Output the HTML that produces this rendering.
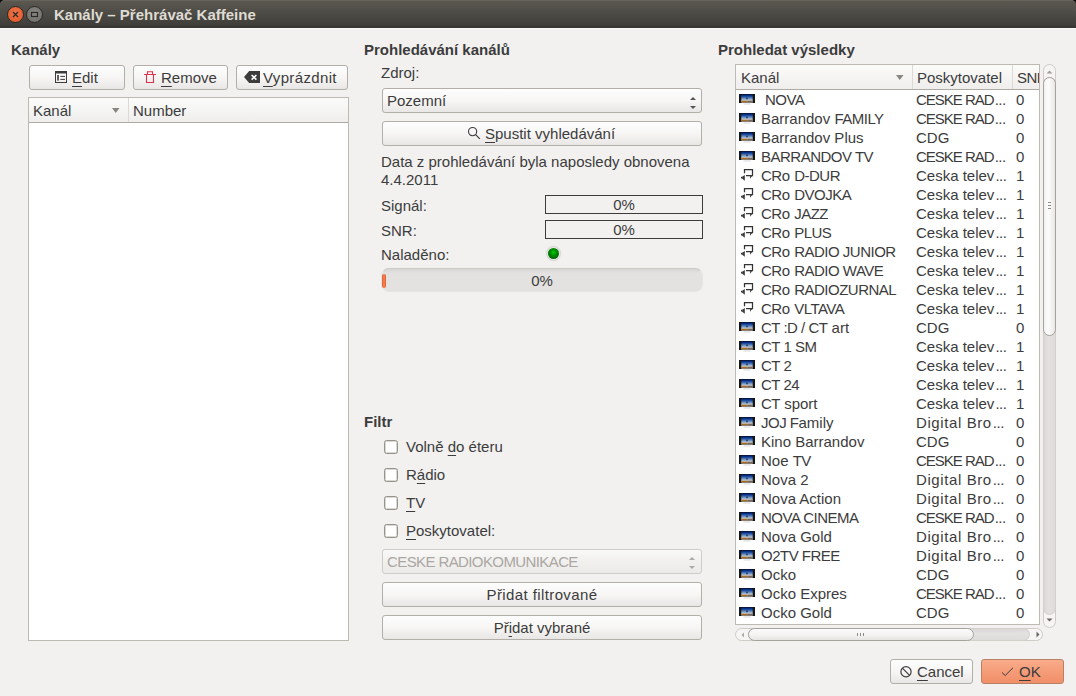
<!DOCTYPE html>
<html><head><meta charset="utf-8">
<style>
*{box-sizing:border-box;margin:0;padding:0}
html,body{width:1076px;height:696px;overflow:hidden;background:#f2f1f0}
body{position:relative;font-family:"Liberation Sans",sans-serif;font-size:15px;line-height:17px;color:#3c3c3c}
.a{position:absolute;white-space:nowrap}
#tb{left:0;top:0;width:1076px;height:28px;background:linear-gradient(#5b5950,#4f4d47 40%,#403f3b 88%,#35332f);border-radius:5px 5px 0 0;box-shadow:inset 0 1px 0 #66645a}
#tbw{left:0;top:0;width:1076px;height:6px;background:#120c10}
.title{left:54px;top:6px;font-size:15px;font-weight:bold;color:#dfdbd2}
.cbtn{width:17px;height:17px;border-radius:50%;top:6px}
.lbl{font-weight:bold;font-size:15px}
.btn{border:1px solid #b2aea8;border-radius:3px;background:linear-gradient(#fdfdfd,#f7f6f5 50%,#e9e7e5)}
.u{text-decoration:underline;text-decoration-thickness:1px;text-underline-offset:3px}
.tbl{background:#fff;border:1px solid #bdb9b3}
.hdr{background:linear-gradient(#fbfbfa,#efeeed);border-bottom:1px solid #aeaaa4;height:25px}
.chk{width:14px;height:14px;border:1px solid #96928c;border-radius:2.5px;background:#fff;box-shadow:inset 0 0 0 0.5px #b5b1ab}
.box{border:1px solid #3c3c3c;background:#f2f1f0;text-align:center;line-height:18px}
svg{position:absolute;overflow:visible}
.U{letter-spacing:-0.5px}
</style></head><body>
<div class="a" id="tbw"></div>
<div class="a" id="tb"></div>
<div class="a title">Kanály – Přehrávač Kaffeine</div>
<div class="a cbtn" style="left:7px;background:radial-gradient(circle at 50% 40%,#f0754a,#e05526);border:1px solid #2a2926"></div>
<div class="a cbtn" style="left:26px;background:radial-gradient(circle at 50% 40%,#8a8883,#6b6a66);border:1px solid #2a2926"></div>
<svg style="left:0;top:0" width="50" height="28"><path d="M13 12L18 17M18 12L13 17" stroke="#2b2a27" stroke-width="1.3"/><rect x="31.5" y="12.5" width="6" height="4" fill="none" stroke="#2b2a27" stroke-width="1.2"/></svg>
<div class="a" style="left:0;top:28px;width:1076px;height:1px;background:#fbfaf9"></div>

<!-- LEFT -->
<div class="a lbl" style="left:11px;top:41px">Kanály</div>
<div class="a btn" style="left:29px;top:65px;width:96px;height:25px"></div>
<div class="a btn" style="left:133px;top:65px;width:95px;height:25px"></div>
<div class="a btn" style="left:236px;top:65px;width:112px;height:25px"></div>
<svg style="left:55px;top:71px" width="12" height="12"><rect x="0.5" y="0.5" width="11" height="11" fill="none" stroke="#3c3c3c"/><rect x="0" y="0" width="12" height="2.5" fill="#3c3c3c"/><rect x="2.2" y="4" width="1.6" height="5.6" fill="#3c3c3c"/><path d="M5.3 5.4H10M5.3 8.4H10" stroke="#3c3c3c" stroke-width="1"/></svg>
<div class="a" style="left:72px;top:69px"><span class="u">E</span>dit</div>
<svg style="left:144px;top:71px" width="12" height="12"><path d="M0 3.5H12M2.5 3.5V11.5H9.5V3.5M3.5 3.5V0.8H8.5V3.5" fill="none" stroke="#d9344c" stroke-width="1.1"/></svg>
<div class="a" style="left:161px;top:69px"><span class="u">R</span>emove</div>
<svg style="left:244px;top:71px" width="16" height="12"><path d="M0 6L5.2 0H16V12H5.2Z" fill="#3c3c3c"/><path d="M7.6 4L12.4 8.6M12.4 4L7.6 8.6" stroke="#fff" stroke-width="1.6"/></svg>
<div class="a" style="left:263px;top:69px;letter-spacing:0.35px"><span class="u">V</span>yprázdnit</div>
<div class="a tbl" style="left:28px;top:97px;width:321px;height:544px"></div>
<div class="a hdr" style="left:29px;top:98px;width:319px"></div>
<div class="a" style="left:128px;top:98px;width:1px;height:24px;background:#dcdad7"></div>
<div class="a" style="left:33px;top:102px">Kanál</div>
<svg style="left:112px;top:108px" width="8" height="6"><path d="M0 0H7.5L3.75 5Z" fill="#8a8782"/></svg>
<div class="a" style="left:133px;top:102px">Number</div>

<!-- MIDDLE -->
<div class="a lbl" style="left:364px;top:41px">Prohledávání kanálů</div>
<div class="a" style="left:381px;top:64px">Zdroj:</div>
<div class="a btn" style="left:382px;top:88px;width:320px;height:25px"></div>
<div class="a" style="left:387px;top:92px">Pozemní</div>
<svg style="left:690px;top:96px" width="7" height="14"><path d="M0 4H6L3 1Z" fill="#555"/><path d="M0 10H6L3 13Z" fill="#555"/></svg>
<div class="a btn" style="left:382px;top:121px;width:320px;height:25px"></div>
<svg style="left:468px;top:127px" width="13" height="13"><circle cx="4.6" cy="4.6" r="4.1" fill="none" stroke="#3c3c3c" stroke-width="1.1"/><path d="M7.6 7.6L11.8 11.8" stroke="#3c3c3c" stroke-width="1.2"/></svg>
<div class="a" style="left:485px;top:125px"><span class="u">S</span>pustit vyhledávání</div>
<div class="a" style="left:381px;top:153px">Data z prohledávání byla naposledy obnovena</div>
<div class="a" style="left:381px;top:171px">4.4.2011</div>
<div class="a" style="left:381px;top:197px">Signál:</div>
<div class="a box" style="left:545px;top:195px;width:158px;height:19px">0%</div>
<div class="a" style="left:381px;top:222px">SNR:</div>
<div class="a box" style="left:545px;top:220px;width:158px;height:19px">0%</div>
<div class="a" style="left:381px;top:246px">Naladěno:</div>
<div class="a" style="left:548px;top:248px;width:11px;height:11px;border-radius:50%;background:radial-gradient(circle at 50% 40%,#08d008,#009400 30%,#006a00 70%,#005000);box-shadow:0 0 0 1px #e9e8e7,0 0 1px 2px rgba(150,150,150,.3)"></div>
<div class="a" style="left:381px;top:268px;width:322px;height:24px;border-radius:8px;background:linear-gradient(#d9d7d4,#e3e2e0 20%,#e3e2e0);border:1px solid #e6e5e3;border-top-color:#cdcac6"></div>
<div class="a" style="left:382px;top:274px;width:4px;height:14px;border-radius:2px;background:linear-gradient(90deg,#e0582a,#f88a5a,#e0582a)"></div>
<div class="a" style="left:381px;top:272px;width:322px;text-align:center">0%</div>

<div class="a lbl" style="left:364px;top:413px">Filtr</div>
<div class="a chk" style="left:384px;top:440px"></div>
<div class="a" style="left:406px;top:438px">Volně <span class="u">d</span>o éteru</div>
<div class="a chk" style="left:384px;top:468px"></div>
<div class="a" style="left:406px;top:466px">R<span class="u">á</span>dio</div>
<div class="a chk" style="left:384px;top:496px"></div>
<div class="a" style="left:406px;top:494px"><span class="u">T</span>V</div>
<div class="a chk" style="left:384px;top:524px"></div>
<div class="a" style="left:406px;top:522px"><span class="u">P</span>oskytovatel:</div>
<div class="a" style="left:382px;top:549px;width:320px;height:25px;border:1px solid #cfccc8;border-radius:3px;background:linear-gradient(#f9f9f8,#f1f0ef 50%,#ebeae8)"></div>
<div class="a" style="left:387px;top:553px;color:#aaa7a2;letter-spacing:-0.6px">CESKE RADIOKOMUNIKACE</div>
<svg style="left:689px;top:556px" width="7" height="14"><path d="M0 4H6L3 1Z" fill="#aaa"/><path d="M0 10H6L3 13Z" fill="#aaa"/></svg>
<div class="a btn" style="left:382px;top:582px;width:320px;height:25px;text-align:center;line-height:23px;letter-spacing:0.4px">Přidat filtrované</div>
<div class="a btn" style="left:382px;top:615px;width:320px;height:25px;text-align:center;line-height:23px">Př<span class="u">i</span>dat vybrané</div>

<!-- RIGHT -->
<svg width="0" height="0" style="position:absolute"><defs>
<linearGradient id="scr" x1="0" y1="0" x2="0" y2="1"><stop offset="0" stop-color="#00145a"/><stop offset="0.2" stop-color="#0b3c98"/><stop offset="0.5" stop-color="#6d92c4"/><stop offset="0.75" stop-color="#cfd0d0"/><stop offset="1" stop-color="#d8d0c0"/></linearGradient>
<g id="tvi"><rect x="0" y="0" width="16" height="9" fill="#161616"/><rect x="2.3" y="0.4" width="11.4" height="8.2" fill="url(#scr)"/><rect x="2.3" y="6.7" width="6.2" height="1.5" fill="#a46a28"/><rect x="8.5" y="6.7" width="5.2" height="1.5" fill="#75655a"/><circle cx="8" cy="4.3" r="1.1" fill="#34456a"/><rect x="4.5" y="9.4" width="7" height="1.1" fill="#d8dbe0"/></g>
<g id="rdi"><path d="M5.5 5.2V1.5H13.5V7.5H7" fill="none" stroke="#333" stroke-width="1.25"/><path d="M14 7L11 10.8L11.2 7Z" fill="#3a3a3a"/><path d="M2 8.8H3.4V10.6H2Z" fill="#3a3a3a"/><path d="M3.2 8.8L5.8 7V12.8L3.2 10.8Z" fill="#3a3a3a"/></g>
</defs></svg>
<div class="a lbl" style="left:718px;top:41px">Prohledat výsledky</div>
<div class="a tbl" style="left:735px;top:64px;width:305px;height:561px;overflow:hidden">
<div class="a hdr" style="left:0;top:0;width:303px"></div>
<div class="a" style="left:176px;top:0;width:1px;height:24px;background:#dcdad7"></div>
<div class="a" style="left:276px;top:0;width:1px;height:24px;background:#dcdad7"></div>
<div class="a" style="left:5px;top:4px">Kanál</div>
<svg style="left:160px;top:10px" width="8" height="6"><path d="M0 0H7.5L3.75 5Z" fill="#8a8782"/></svg>
<div class="a" style="left:181px;top:4px">Poskytovatel</div>
<div class="a U" style="left:281px;top:4px">SNR</div>
<svg style="left:3px;top:29px" width="16" height="12"><use href="#tvi"/></svg>
<div class="a" style="left:29px;top:26px"><span class="U">NOVA</span></div><div class="a" style="left:180px;top:26px"><span style="letter-spacing:-1px">CESKE RAD</span><span style="letter-spacing:-0.5px;margin-left:1px">...</span></div><div class="a" style="left:280px;top:26px">0</div>
<svg style="left:3px;top:48px" width="16" height="12"><use href="#tvi"/></svg>
<div class="a" style="left:25px;top:45px">Barrandov <span class="U">FAMILY</span></div><div class="a" style="left:180px;top:45px"><span style="letter-spacing:-1px">CESKE RAD</span><span style="letter-spacing:-0.5px;margin-left:1px">...</span></div><div class="a" style="left:280px;top:45px">0</div>
<svg style="left:3px;top:67px" width="16" height="12"><use href="#tvi"/></svg>
<div class="a" style="left:25px;top:64px">Barrandov Plus</div><div class="a" style="left:180px;top:64px">CDG</div><div class="a" style="left:280px;top:64px">0</div>
<svg style="left:3px;top:86px" width="16" height="12"><use href="#tvi"/></svg>
<div class="a" style="left:25px;top:83px"><span class="U">BARRANDOV TV</span></div><div class="a" style="left:180px;top:83px"><span style="letter-spacing:-1px">CESKE RAD</span><span style="letter-spacing:-0.5px;margin-left:1px">...</span></div><div class="a" style="left:280px;top:83px">0</div>
<svg style="left:3px;top:103px" width="16" height="14"><use href="#rdi"/></svg>
<div class="a" style="left:25px;top:102px"><span class="U">CR</span>o <span class="U">D-DUR</span></div><div class="a" style="left:180px;top:102px">Ceska telev<span style="letter-spacing:-0.5px;margin-left:1px">...</span></div><div class="a" style="left:280px;top:102px">1</div>
<svg style="left:3px;top:122px" width="16" height="14"><use href="#rdi"/></svg>
<div class="a" style="left:25px;top:121px"><span class="U">CR</span>o <span class="U">DVOJKA</span></div><div class="a" style="left:180px;top:121px">Ceska telev<span style="letter-spacing:-0.5px;margin-left:1px">...</span></div><div class="a" style="left:280px;top:121px">1</div>
<svg style="left:3px;top:141px" width="16" height="14"><use href="#rdi"/></svg>
<div class="a" style="left:25px;top:140px"><span class="U">CR</span>o <span class="U">JAZZ</span></div><div class="a" style="left:180px;top:140px">Ceska telev<span style="letter-spacing:-0.5px;margin-left:1px">...</span></div><div class="a" style="left:280px;top:140px">1</div>
<svg style="left:3px;top:160px" width="16" height="14"><use href="#rdi"/></svg>
<div class="a" style="left:25px;top:159px"><span class="U">CR</span>o <span class="U">PLUS</span></div><div class="a" style="left:180px;top:159px">Ceska telev<span style="letter-spacing:-0.5px;margin-left:1px">...</span></div><div class="a" style="left:280px;top:159px">1</div>
<svg style="left:3px;top:179px" width="16" height="14"><use href="#rdi"/></svg>
<div class="a" style="left:25px;top:178px"><span class="U">CR</span>o <span class="U">RADIO JUNIOR</span></div><div class="a" style="left:180px;top:178px">Ceska telev<span style="letter-spacing:-0.5px;margin-left:1px">...</span></div><div class="a" style="left:280px;top:178px">1</div>
<svg style="left:3px;top:198px" width="16" height="14"><use href="#rdi"/></svg>
<div class="a" style="left:25px;top:197px"><span class="U">CR</span>o <span class="U">RADIO WAVE</span></div><div class="a" style="left:180px;top:197px">Ceska telev<span style="letter-spacing:-0.5px;margin-left:1px">...</span></div><div class="a" style="left:280px;top:197px">1</div>
<svg style="left:3px;top:217px" width="16" height="14"><use href="#rdi"/></svg>
<div class="a" style="left:25px;top:216px"><span class="U">CR</span>o <span class="U">RADIOZURNAL</span></div><div class="a" style="left:180px;top:216px">Ceska telev<span style="letter-spacing:-0.5px;margin-left:1px">...</span></div><div class="a" style="left:280px;top:216px">1</div>
<svg style="left:3px;top:236px" width="16" height="14"><use href="#rdi"/></svg>
<div class="a" style="left:25px;top:235px"><span class="U">CR</span>o <span class="U">VLTAVA</span></div><div class="a" style="left:180px;top:235px">Ceska telev<span style="letter-spacing:-0.5px;margin-left:1px">...</span></div><div class="a" style="left:280px;top:235px">1</div>
<svg style="left:3px;top:257px" width="16" height="12"><use href="#tvi"/></svg>
<div class="a" style="left:25px;top:254px"><span class="U">CT :D / CT</span> art</div><div class="a" style="left:180px;top:254px">CDG</div><div class="a" style="left:280px;top:254px">0</div>
<svg style="left:3px;top:276px" width="16" height="12"><use href="#tvi"/></svg>
<div class="a" style="left:25px;top:273px"><span class="U">CT 1 SM</span></div><div class="a" style="left:180px;top:273px">Ceska telev<span style="letter-spacing:-0.5px;margin-left:1px">...</span></div><div class="a" style="left:280px;top:273px">1</div>
<svg style="left:3px;top:295px" width="16" height="12"><use href="#tvi"/></svg>
<div class="a" style="left:25px;top:292px"><span class="U">CT 2</span></div><div class="a" style="left:180px;top:292px">Ceska telev<span style="letter-spacing:-0.5px;margin-left:1px">...</span></div><div class="a" style="left:280px;top:292px">1</div>
<svg style="left:3px;top:314px" width="16" height="12"><use href="#tvi"/></svg>
<div class="a" style="left:25px;top:311px"><span class="U">CT 24</span></div><div class="a" style="left:180px;top:311px">Ceska telev<span style="letter-spacing:-0.5px;margin-left:1px">...</span></div><div class="a" style="left:280px;top:311px">1</div>
<svg style="left:3px;top:333px" width="16" height="12"><use href="#tvi"/></svg>
<div class="a" style="left:25px;top:330px"><span class="U">CT</span> sport</div><div class="a" style="left:180px;top:330px">Ceska telev<span style="letter-spacing:-0.5px;margin-left:1px">...</span></div><div class="a" style="left:280px;top:330px">1</div>
<svg style="left:3px;top:352px" width="16" height="12"><use href="#tvi"/></svg>
<div class="a" style="left:25px;top:349px"><span class="U">JOJ F</span>amily</div><div class="a" style="left:180px;top:349px"><span style="letter-spacing:0.6px">Digital Bro</span><span style="letter-spacing:-0.5px;margin-left:1px">...</span></div><div class="a" style="left:280px;top:349px">0</div>
<svg style="left:3px;top:371px" width="16" height="12"><use href="#tvi"/></svg>
<div class="a" style="left:25px;top:368px">Kino Barrandov</div><div class="a" style="left:180px;top:368px">CDG</div><div class="a" style="left:280px;top:368px">0</div>
<svg style="left:3px;top:390px" width="16" height="12"><use href="#tvi"/></svg>
<div class="a" style="left:25px;top:387px">Noe <span class="U">TV</span></div><div class="a" style="left:180px;top:387px"><span style="letter-spacing:-1px">CESKE RAD</span><span style="letter-spacing:-0.5px;margin-left:1px">...</span></div><div class="a" style="left:280px;top:387px">0</div>
<svg style="left:3px;top:409px" width="16" height="12"><use href="#tvi"/></svg>
<div class="a" style="left:25px;top:406px">Nova 2</div><div class="a" style="left:180px;top:406px"><span style="letter-spacing:0.6px">Digital Bro</span><span style="letter-spacing:-0.5px;margin-left:1px">...</span></div><div class="a" style="left:280px;top:406px">0</div>
<svg style="left:3px;top:428px" width="16" height="12"><use href="#tvi"/></svg>
<div class="a" style="left:25px;top:425px">Nova Action</div><div class="a" style="left:180px;top:425px"><span style="letter-spacing:0.6px">Digital Bro</span><span style="letter-spacing:-0.5px;margin-left:1px">...</span></div><div class="a" style="left:280px;top:425px">0</div>
<svg style="left:3px;top:447px" width="16" height="12"><use href="#tvi"/></svg>
<div class="a" style="left:25px;top:444px"><span class="U">NOVA CINEMA</span></div><div class="a" style="left:180px;top:444px"><span style="letter-spacing:-1px">CESKE RAD</span><span style="letter-spacing:-0.5px;margin-left:1px">...</span></div><div class="a" style="left:280px;top:444px">0</div>
<svg style="left:3px;top:466px" width="16" height="12"><use href="#tvi"/></svg>
<div class="a" style="left:25px;top:463px">Nova Gold</div><div class="a" style="left:180px;top:463px"><span style="letter-spacing:0.6px">Digital Bro</span><span style="letter-spacing:-0.5px;margin-left:1px">...</span></div><div class="a" style="left:280px;top:463px">0</div>
<svg style="left:3px;top:485px" width="16" height="12"><use href="#tvi"/></svg>
<div class="a" style="left:25px;top:482px"><span class="U">O2TV FREE</span></div><div class="a" style="left:180px;top:482px"><span style="letter-spacing:0.6px">Digital Bro</span><span style="letter-spacing:-0.5px;margin-left:1px">...</span></div><div class="a" style="left:280px;top:482px">0</div>
<svg style="left:3px;top:504px" width="16" height="12"><use href="#tvi"/></svg>
<div class="a" style="left:25px;top:501px">Ocko</div><div class="a" style="left:180px;top:501px">CDG</div><div class="a" style="left:280px;top:501px">0</div>
<svg style="left:3px;top:523px" width="16" height="12"><use href="#tvi"/></svg>
<div class="a" style="left:25px;top:520px">Ocko Expres</div><div class="a" style="left:180px;top:520px"><span style="letter-spacing:-1px">CESKE RAD</span><span style="letter-spacing:-0.5px;margin-left:1px">...</span></div><div class="a" style="left:280px;top:520px">0</div>
<svg style="left:3px;top:542px" width="16" height="12"><use href="#tvi"/></svg>
<div class="a" style="left:25px;top:539px">Ocko Gold</div><div class="a" style="left:180px;top:539px">CDG</div><div class="a" style="left:280px;top:539px">0</div>
</div>
<div class="a" style="left:1043px;top:64px;width:13px;height:564px;border:1px solid #cfccc7;border-radius:7px;background:#f6f5f4"></div>
<div class="a" style="left:1043px;top:77px;width:13px;height:538px;border:1px solid #d3d0cb;border-radius:7px;background:linear-gradient(90deg,#d9d8d6,#e2e1df 40%,#dddcda)"></div>
<svg style="left:1046px;top:70px" width="7" height="4"><path d="M0.5 3.5H6.5L3.5 0.5Z" fill="#a09d98"/></svg>
<div class="a" style="left:1043px;top:77px;width:13px;height:259px;border:1px solid #a6a29d;border-radius:7px;background:linear-gradient(90deg,#f3f2f1,#fcfcfc 40%,#e9e8e6)"></div>
<svg style="left:1046px;top:618px" width="7" height="4"><path d="M0.5 0.5H6.5L3.5 3.5Z" fill="#6a6762"/></svg>
<div class="a" style="left:735px;top:628px;width:308px;height:13px;border:1px solid #cfccc7;border-radius:7px;background:#f6f5f4"></div>
<div class="a" style="left:748px;top:628px;width:282px;height:13px;border:1px solid #d3d0cb;border-radius:7px;background:linear-gradient(#d9d8d6,#e2e1df 40%,#dddcda)"></div>
<svg style="left:1036px;top:631px" width="4" height="7"><path d="M0.5 0.5V6.5L3.5 3.5Z" fill="#6a6762"/></svg>
<svg style="left:741px;top:632px" width="4" height="6"><path d="M3 0.5V5.5L0.5 3Z" fill="#aaa"/></svg>
<div class="a" style="left:748px;top:628px;width:226px;height:13px;border:1px solid #a6a29d;border-radius:7px;background:linear-gradient(#fcfcfc,#f3f2f1 60%,#e6e5e3)"></div>
<div class="a" style="left:857px;top:633px;width:1px;height:3px;background:#8e8a85;box-shadow:3px 0 #8e8a85,6px 0 #8e8a85"></div>
<div class="a" style="left:1048px;top:202px;width:3px;height:1px;background:#8e8a85;box-shadow:0 3px #8e8a85,0 6px #8e8a85"></div>

<!-- BOTTOM BUTTONS -->
<div class="a btn" style="left:890px;top:659px;width:83px;height:25px"></div>
<svg style="left:900px;top:666px" width="12" height="12"><circle cx="6" cy="5.7" r="5.1" fill="none" stroke="#3c3c3c" stroke-width="1.2"/><path d="M2.4 2.1L9.6 9.3" stroke="#3c3c3c" stroke-width="1.2"/></svg>
<div class="a" style="left:917px;top:663px"><span class="u">C</span>ancel</div>
<div class="a" style="left:981px;top:659px;width:83px;height:25px;border:1px solid #b98068;border-radius:3px;background:linear-gradient(#f9ac8b,#f59c78 50%,#f18f68)"></div>
<svg style="left:1001px;top:666px" width="14" height="12"><path d="M1 6.5L4.2 9.5L12 1.8" fill="none" stroke="#3c3c3c" stroke-width="1"/></svg>
<div class="a" style="left:1019px;top:663px"><span class="u">O</span>K</div>

</body></html>
